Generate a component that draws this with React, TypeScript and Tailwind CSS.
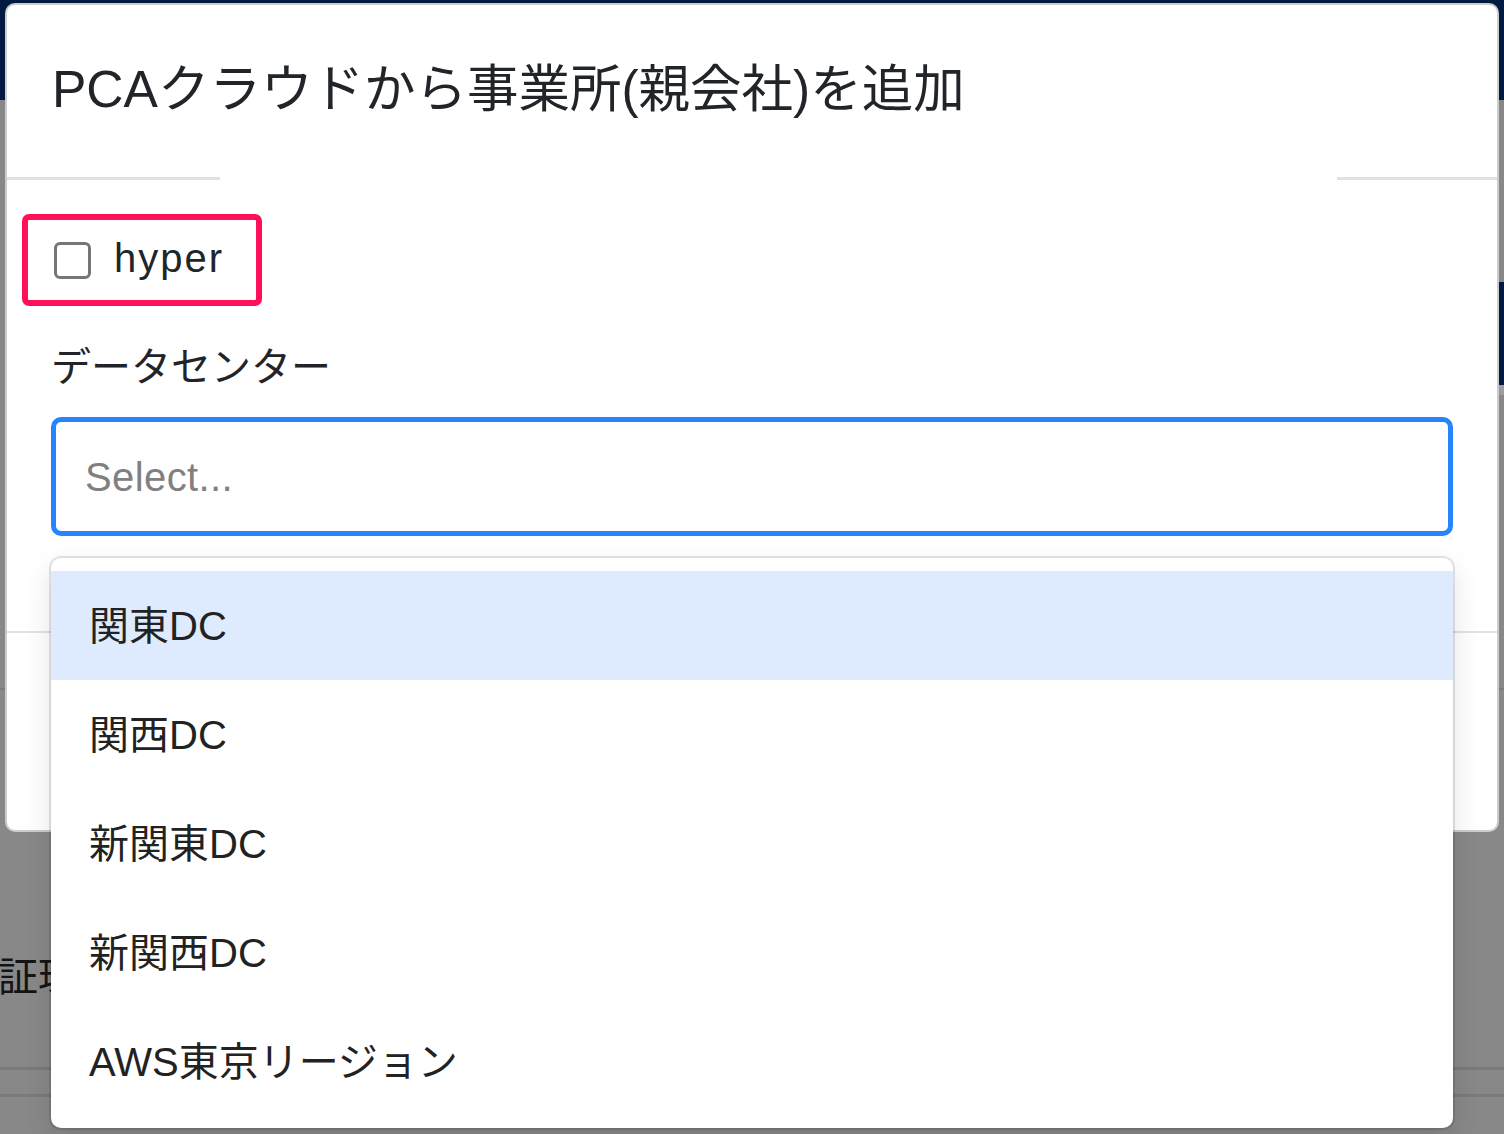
const font = { fontFamily: '"Liberation Sans", "Noto Sans CJK JP", sans-serif' };

const options = ["関東DC", "関西DC", "新関東DC", "新関西DC", "AWS東京リージョン"];

function Background() {
  return (
    <div className="flex flex-col w-full h-full bg-[#888888]">
      <div className="h-[100px] bg-[#011a42]" />
      <div className="h-[182px]" />
      <div className="h-[103px] flex justify-end">
        <div className="w-[300px] bg-[#011a42]" />
      </div>
      <div className="h-[10px] flex justify-end">
        <div className="w-[300px] bg-[#9c9c9c]" />
      </div>
      <div className="h-[293px]" />
      <div className="h-[2px] bg-[#7b7b7b]" />
      <div className="h-[262px]" />
      <div className="h-[50px] flex items-center">
        <span className="ml-[-2px] text-[40px] leading-[50px] text-[#141414]">証環</span>
      </div>
      <div className="h-[65px]" />
      <div className="h-[3px] bg-[#7a7a7a]" />
      <div className="h-[24px]" />
      <div className="h-[3px] bg-[#7a7a7a]" />
    </div>
  );
}

function Checkbox() {
  return (
    <div className="w-[37px] h-[37px] rounded-[6px] border-[3px] border-[#767676] bg-white" />
  );
}

function SelectMenu() {
  return (
    <div className="absolute left-0 right-0 top-full mt-[22px] bg-white rounded-[10px] shadow-[0_0_0_2px_rgba(0,0,0,0.1),0_10px_28px_rgba(0,0,0,0.12)] pt-[13px] pb-[12px] z-10">
      {options.map((o, i) => (
        <div
          key={o}
          className={
            "h-[109px] flex items-center pl-[38px] text-[40px] text-[#222222] " +
            (i === 0 ? "bg-[#deebff]" : "")
          }
        >
          {o}
        </div>
      ))}
    </div>
  );
}

export default function App() {
  return (
    <div className="relative w-[1504px] h-[1134px] overflow-hidden" style={font}>
      <Background />

      <div className="absolute left-[5px] top-[3px] w-[1494px] h-[829px] bg-white rounded-[10px] border-[2px] border-black/20 flex flex-col">
        <div className="h-[172px] flex items-center pl-[45px] pb-[4px]">
          <h1 className="text-[51.5px] leading-[60px] text-[#212529] font-normal">
            PCAクラウドから事業所(親会社)を追加
          </h1>
        </div>
        <div className="flex h-[3px]">
          <div className="w-[213px] bg-[#dee2e6]" />
          <div className="flex-1" />
          <div className="w-[160px] bg-[#dee2e6]" />
        </div>

        <div className="flex-1 flex flex-col px-[44px] pt-[34px]">
          <div className="ml-[-29px] w-[240px] h-[92px] border-[6px] border-[#ff1159] rounded-[7px] flex items-center pl-[26px] gap-[23px]">
            <Checkbox />
            <span className="text-[40px] leading-[50px] tracking-[0.05em] text-[#212529] pb-[4px]">hyper</span>
          </div>

          <div className="mt-[31px] text-[40px] leading-[60px] text-[#212529]">データセンター</div>

          <div className="relative mt-[20px]">
            <div className="h-[119px] border-[5px] border-[#2684ff] rounded-[10px] flex items-center pl-[29px]">
              <span className="text-[40px] tracking-[0.01em] text-[#808080]">Select...</span>
            </div>
            <SelectMenu />
          </div>
        </div>

        <div className="h-[199px] border-t-[2px] border-[#dee2e6]" />
      </div>
    </div>
  );
}
